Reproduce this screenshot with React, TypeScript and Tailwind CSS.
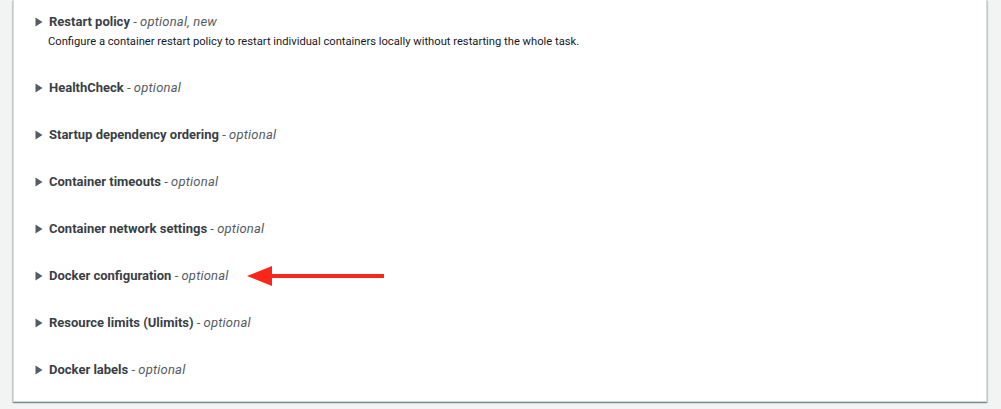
import React from "react";

const items: { title: string; sub: string; desc?: string }[] = [
  {
    title: "Restart policy",
    sub: "optional, new",
    desc: "Configure a container restart policy to restart individual containers locally without restarting the whole task.",
  },
  { title: "HealthCheck", sub: "optional" },
  { title: "Startup dependency ordering", sub: "optional" },
  { title: "Container timeouts", sub: "optional" },
  { title: "Container network settings", sub: "optional" },
  { title: "Docker configuration", sub: "optional" },
  { title: "Resource limits (Ulimits)", sub: "optional" },
  { title: "Docker labels", sub: "optional" },
];

function Caret() {
  return (
    <svg width="8" height="10" viewBox="0 0 8 10" className="shrink-0">
      <path d="M0.5 0.5 L7.5 5 L0.5 9.5 Z" fill="#545b64" />
    </svg>
  );
}

export default function App() {
  return (
    <div
      className="w-[1001px] h-[409px] bg-[#f2f3f3] pl-[13px] pr-[14px] pb-[7px] overflow-hidden"
      style={{ fontFamily: "Roboto, 'Open Sans', Arial, sans-serif" }}
    >
      <div className="relative h-full bg-white border-x border-b border-[#d5dbdb] shadow-[0_1px_1px_0_rgba(0,28,36,0.3),1px_1px_1px_0_rgba(0,28,36,0.15),-1px_1px_1px_0_rgba(0,28,36,0.15)] pt-[12px] pl-[21px] flex flex-col gap-[27px]">
        {items.map((it) => (
          <div key={it.title} className="flex flex-col">
            <div className="flex items-center gap-[6px] h-[20px]">
              <Caret />
              <span className="text-[13px] leading-[20px] text-[#16191f]">
                <span className="font-bold text-[#3a3f46]">{it.title}</span>
                <span className="text-[#545b64]"> - </span>
                <span className="italic text-[#545b64] tracking-[0.2px]">{it.sub}</span>
              </span>
            </div>
            {it.desc && (
              <div className="pl-[13px] text-[11.2px] leading-[19px] text-[#16191f]">
                {it.desc}
              </div>
            )}
          </div>
        ))}
        <svg
          className="absolute left-[232px] top-[265px]"
          width="140"
          height="24"
          viewBox="0 0 140 24"
        >
          <path d="M1 11 L26 1 L26 21 Z" fill="#f8261b" />
          <rect x="24" y="9" width="114" height="4" fill="#f8261b" />
        </svg>
      </div>
    </div>
  );
}
